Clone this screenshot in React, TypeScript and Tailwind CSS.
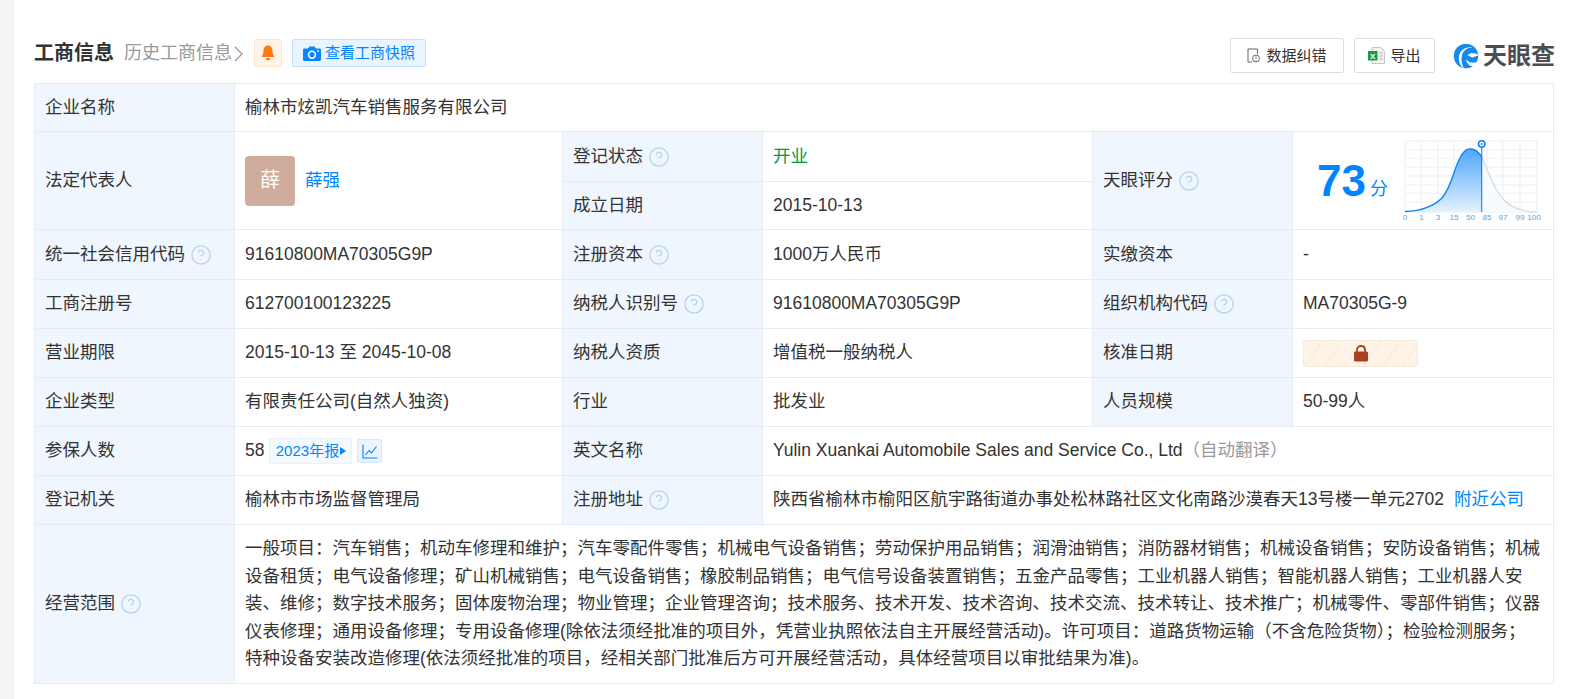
import { CircleHelp } from 'lucide-react'
import type { ReactNode } from 'react'

const font = '"Liberation Sans", "Noto Sans CJK SC", sans-serif'

const scope =
  '一般项目\uff1a汽车销售\uff1b机动车修理和维护\uff1b汽车零配件零售\uff1b机械电气设备销售\uff1b劳动保护用品销售\uff1b润滑油销售\uff1b消防器材销售\uff1b机械设备销售\uff1b安防设备销售\uff1b机械设备租赁\uff1b电气设备修理\uff1b矿山机械销售\uff1b电气设备销售\uff1b橡胶制品销售\uff1b电气信号设备装置销售\uff1b五金产品零售\uff1b工业机器人销售\uff1b智能机器人销售\uff1b工业机器人安装、维修\uff1b数字技术服务\uff1b固体废物治理\uff1b物业管理\uff1b企业管理咨询\uff1b技术服务、技术开发、技术咨询、技术交流、技术转让、技术推广\uff1b机械零件、零部件销售\uff1b仪器仪表修理\uff1b通用设备修理\uff1b专用设备修理(除依法须经批准的项目外\uff0c凭营业执照依法自主开展经营活动)。许可项目\uff1a道路货物运输\uff08不含危险货物\uff09\uff1b检验检测服务\uff1b'
const scope2 = '特种设备安装改造修理(依法须经批准的项目\uff0c经相关部门批准后方可开展经营活动\uff0c具体经营项目以审批结果为准)。'

function Help() {
  return <CircleHelp size={22} strokeWidth={1.4} className="ml-[5px] inline-block shrink-0 text-[#b6d3ed]" />
}

function Label({ children, help, rowSpan }: { children: ReactNode; help?: boolean; rowSpan?: number }) {
  return (
    <td rowSpan={rowSpan} className="border border-[#e4edf5] bg-[#eff6fd] px-[10px] align-middle">
      <div className="flex items-center">
        {children}
        {help && <Help />}
      </div>
    </td>
  )
}

function Value({ children, colSpan, rowSpan }: { children: ReactNode; colSpan?: number; rowSpan?: number }) {
  return (
    <td colSpan={colSpan} rowSpan={rowSpan} className="border border-[#e4edf5] px-[10px] align-middle">
      {children}
    </td>
  )
}

function ScoreChart() {
  const xs = [5, 21.5, 38, 54, 70.5, 87, 103, 120, 137]
  const ys = [3, 11.7, 20.4, 29.3, 38, 47, 55.3, 64, 74]
  const labels = ['0', '1', '3', '15', '50', '85', '97', '99', '100']
  return (
    <svg width="145" height="86" viewBox="0 0 145 86" className="shrink-0">
      <defs>
        <linearGradient id="fillBlue" x1="0" y1="0" x2="0" y2="1">
          <stop offset="0" stopColor="#4fa6fb" />
          <stop offset="1" stopColor="#e4f1fe" />
        </linearGradient>
      </defs>
      {xs.map((x) => (
        <line key={x} x1={x} x2={x} y1="3" y2="74" stroke="#f1f5f9" strokeWidth="1.5" />
      ))}
      {ys.map((y) => (
        <line key={y} x1="5" x2="137" y1={y} y2={y} stroke="#f1f5f9" strokeWidth="1.5" />
      ))}
      <path d="M82 20 C88 33 94 52 105 63 C115 72 125 73.5 137 74 L82 74Z" fill="#f8fafc" />
      <path d="M5 73.5 C20 73 32 70 42 60 C52 48 54 30 60 20 C63 14 66 11 70 11 C75 11 79 14 82 20 L82 74 L5 74Z" fill="url(#fillBlue)" />
      <path d="M82 20 C88 33 94 52 105 63 C115 72 125 73.5 137 74" fill="none" stroke="#cfdbe6" strokeWidth="1.2" />
      <path d="M5 73.5 C20 73 32 70 42 60 C52 48 54 30 60 20 C63 14 66 11 70 11 C75 11 79 14 82 20" fill="none" stroke="#0f84f5" strokeWidth="1.4" />
      <line x1="81.7" x2="81.7" y1="8" y2="74" stroke="#0f84f5" strokeWidth="1.1" />
      <circle cx="81.7" cy="6" r="3.2" fill="#fff" stroke="#0f84f5" strokeWidth="1.6" />
      <circle cx="81.7" cy="6" r="1" fill="#0f84f5" />
      {labels.map((l, i) => (
        <text key={l} x={l === '100' ? 134 : xs[i]} y="82" textAnchor="middle" fontSize="8" fill="#4ba4f6" fontFamily="Liberation Sans">
          {l}
        </text>
      ))}
    </svg>
  )
}

function Logo() {
  return (
    <div className="-mr-[2px] ml-[18px] flex items-center">
      <svg width="26" height="26" viewBox="0 0 26 26" className="shrink-0">
        <circle cx="13" cy="13" r="12.2" fill="#1589ee" />
        <path d="M26 6 C19 2 11 5 9 12 C8 16 8.5 20 11 26 C6 22 4.5 15 7 10 C10 4 20 2 26 6Z" fill="#fff" />
        <path d="M14.5 12 C17 9.5 22 9.5 26 12 L19.5 14.5 C18 14 16 13 14.5 12Z" fill="#fff" />
        <path d="M13 16 C15 19 19 21 24 19 L21 23 C17 24 14 21 13 16Z" fill="#fff" />
      </svg>
      <span className="ml-[4px] text-[24px] leading-none font-bold text-[#4a4d52]">天眼查</span>
    </div>
  )
}

export default function App() {
  return (
    <div className="flex h-[699px] overflow-hidden bg-white text-[17.5px] leading-[27.5px] text-[#333]" style={{ fontFamily: font }}>
      <div className="w-[14px] shrink-0 border-r border-[#efefef] bg-[#f5f5f5]" />
      <div className="flex-1 pt-[38px] pl-[20px]">
        <div className="flex h-[35px] w-[1519px] items-start">
          <div className="mt-[1px] flex h-[28px] items-center">
            <h2 className="mt-[2px] text-[20px] font-bold text-[#333]">工商信息</h2>
            <span className="mt-[2px] ml-[10px] flex items-center text-[18px] text-[#999]">
              历史工商信息
              <svg width="9" height="16" viewBox="0 0 9 16" className="ml-[2px]">
                <path d="M1 1 L8 8 L1 15" fill="none" stroke="#999" strokeWidth="1.3" />
              </svg>
            </span>
            <span className="ml-[11px] flex h-[28px] w-[28px] items-center justify-center rounded-[2px] border border-[#ffe4cc] bg-[#fff3e8]">
              <svg width="14" height="16" viewBox="0 0 14 16">
                <path d="M7 0.5 C3.8 0.5 2.5 3 2.5 6 C2.5 9 1.5 10.5 0.5 12 L13.5 12 C12.5 10.5 11.5 9 11.5 6 C11.5 3 10.2 0.5 7 0.5Z M5 13 L9 13 C9 14.8 8 15.5 7 15.5 C6 15.5 5 14.8 5 13Z" fill="#ff7a14" />
              </svg>
            </span>
            <span className="ml-[10px] flex h-[28px] w-[134px] items-center rounded-[2px] border border-[#c4e0fc] bg-[#e8f4ff] pl-[10px] text-[15px] text-[#0084ff]">
              <svg width="18" height="15" viewBox="0 0 18 15" className="mr-[4px] shrink-0">
                <path d="M1.5 2.5 L5 2.5 L6.5 0.5 L11.5 0.5 L13 2.5 L16.5 2.5 C17.3 2.5 18 3.2 18 4 L18 13.5 C18 14.3 17.3 15 16.5 15 L1.5 15 C0.7 15 0 14.3 0 13.5 L0 4 C0 3.2 0.7 2.5 1.5 2.5Z" fill="#0a84ff" />
                <circle cx="9" cy="8.7" r="3.4" fill="none" stroke="#fff" strokeWidth="1.6" />
                <circle cx="15" cy="5" r="0.9" fill="#fff" />
              </svg>
              查看工商快照
            </span>
          </div>
          <div className="ml-auto flex items-center">
            <button className="flex h-[35px] w-[114px] items-center justify-center rounded-[2px] border border-[#ddd] text-[15px] text-[#333]">
              <svg width="13" height="15" viewBox="0 0 13 15" className="mr-[6px]">
                <path d="M10.5 6 L10.5 1 L1 1 L1 14 L5 14" fill="none" stroke="#666" strokeWidth="1" />
                <circle cx="9" cy="10.5" r="3.5" fill="none" stroke="#666" strokeWidth="1" />
                <path d="M9 8.5 L9 11 M9 12 L9 12.6" stroke="#666" strokeWidth="1" />
              </svg>
              数据纠错
            </button>
            <button className="ml-[10px] flex h-[35px] w-[81px] items-center justify-center rounded-[2px] border border-[#ddd] text-[15px] text-[#333]">
              <svg width="17" height="17" viewBox="0 0 17 17" className="mr-[5px]">
                <path d="M4 0.5 L12.5 0.5 L16.5 4.5 L16.5 16.5 L4 16.5Z" fill="#f2f2f2" stroke="#b9b9b9" strokeWidth="0.8" />
                <path d="M11 6 H15 M11 9 H15 M11 12 H15" stroke="#b9b9b9" strokeWidth="1" />
                <rect x="0" y="4" width="9.5" height="9.5" fill="#1d9a4c" />
                <text x="4.75" y="11.5" textAnchor="middle" fontSize="8" fontWeight="700" fill="#fff" fontFamily="Liberation Sans">X</text>
              </svg>
              导出
            </button>
            <Logo />
          </div>
        </div>

        <table className="mt-[10px] w-[1519px] table-fixed border-collapse">
          <colgroup>
            <col className="w-[200px]" />
            <col className="w-[328px]" />
            <col className="w-[200px]" />
            <col className="w-[330px]" />
            <col className="w-[200px]" />
            <col className="w-[261px]" />
          </colgroup>
          <tbody>
            <tr className="h-[48px]">
              <Label>企业名称</Label>
              <Value colSpan={5}>榆林市炫凯汽车销售服务有限公司</Value>
            </tr>
            <tr className="h-[50px]">
              <Label rowSpan={2}>法定代表人</Label>
              <Value rowSpan={2}>
                <div className="flex items-center">
                  <span className="flex h-[50px] w-[50px] items-center justify-center rounded-[4px] bg-[#d0ac9c] text-[20px] text-white">薛</span>
                  <a className="ml-[10px] text-[#0084ff]">薛强</a>
                </div>
              </Value>
              <Label help>登记状态</Label>
              <Value><span className="text-[#009a44]">开业</span></Value>
              <Label rowSpan={2} help>天眼评分</Label>
              <Value rowSpan={2}>
                <div className="-mr-[2px] flex items-center justify-end">
                  <span className="text-[44px] leading-none font-bold text-[#0084ff]">73</span>
                  <span className="mt-[18px] mr-[12px] ml-[4px] text-[18px] text-[#0084ff]">分</span>
                  <ScoreChart />
                </div>
              </Value>
            </tr>
            <tr className="h-[48px]">
              <Label>成立日期</Label>
              <Value>2015-10-13</Value>
            </tr>
            <tr className="h-[50px]">
              <Label help>统一社会信用代码</Label>
              <Value>91610800MA70305G9P</Value>
              <Label help>注册资本</Label>
              <Value>1000万人民币</Value>
              <Label>实缴资本</Label>
              <Value>-</Value>
            </tr>
            <tr className="h-[49px]">
              <Label>工商注册号</Label>
              <Value>612700100123225</Value>
              <Label help>纳税人识别号</Label>
              <Value>91610800MA70305G9P</Value>
              <Label help>组织机构代码</Label>
              <Value>MA70305G-9</Value>
            </tr>
            <tr className="h-[49px]">
              <Label>营业期限</Label>
              <Value>2015-10-13 至 2045-10-08</Value>
              <Label>纳税人资质</Label>
              <Value>增值税一般纳税人</Value>
              <Label>核准日期</Label>
              <Value>
                <div className="flex h-[27px] w-[115px] items-center justify-center rounded-[3px] border border-[#f7e9da] bg-[repeating-linear-gradient(125deg,#fdf3e7_0px,#fdf3e7_14px,#f8e8d8_15px,#fdf3e7_16px)]">
                  <svg width="16" height="17" viewBox="0 0 16 17">
                    <path d="M4 7 L4 5 C4 2.5 5.8 1 8 1 C10.2 1 12 2.5 12 5 L12 7" fill="none" stroke="#a83f22" strokeWidth="1.8" />
                    <rect x="1" y="6.5" width="14" height="10" rx="1.5" fill="#a83f22" />
                  </svg>
                </div>
              </Value>
            </tr>
            <tr className="h-[49px]">
              <Label>企业类型</Label>
              <Value>有限责任公司(自然人独资)</Value>
              <Label>行业</Label>
              <Value>批发业</Value>
              <Label>人员规模</Label>
              <Value>50-99人</Value>
            </tr>
            <tr className="h-[49px]">
              <Label>参保人数</Label>
              <Value>
                <div className="flex items-center">
                  58
                  <span className="ml-[5px] flex h-[26px] w-[83px] items-center justify-center rounded-[2px] border border-[#e6f1fc] bg-[#f3f9ff] text-[15px] text-[#0084ff]">
                    2023年报
                    <svg width="6" height="8" viewBox="0 0 6 8" className="ml-[1px]"><path d="M0 0 L6 4 L0 8Z" fill="#0084ff" /></svg>
                  </span>
                  <span className="ml-[5px] flex h-[24px] w-[25px] items-center justify-center rounded-[2px] border border-[#d6e9fb] bg-[#e9f4ff]">
                    <svg width="16" height="15" viewBox="0 0 16 15">
                      <path d="M1 0.5 L1 14 L15.5 14" fill="none" stroke="#0084ff" strokeWidth="1.1" />
                      <path d="M3.5 11 L7 6.5 L9.5 9 L14.5 2.5" fill="none" stroke="#0084ff" strokeWidth="1.1" />
                    </svg>
                  </span>
                </div>
              </Value>
              <Label>英文名称</Label>
              <Value colSpan={3}>
                Yulin Xuankai Automobile Sales and Service Co., Ltd<span className="text-[#999]">{'\uff08自动翻译\uff09'}</span>
              </Value>
            </tr>
            <tr className="h-[49px]">
              <Label>登记机关</Label>
              <Value>榆林市市场监督管理局</Value>
              <Label help>注册地址</Label>
              <Value colSpan={3}>
                陕西省榆林市榆阳区航宇路街道办事处松林路社区文化南路沙漠春天13号楼一单元2702
                <a className="ml-[10px] text-[#0084ff]">附近公司</a>
              </Value>
            </tr>
            <tr className="h-[159px]">
              <Label help>经营范围</Label>
              <Value colSpan={5}>
                {scope}
                <br />
                {scope2}
              </Value>
            </tr>
          </tbody>
        </table>
      </div>
    </div>
  )
}
